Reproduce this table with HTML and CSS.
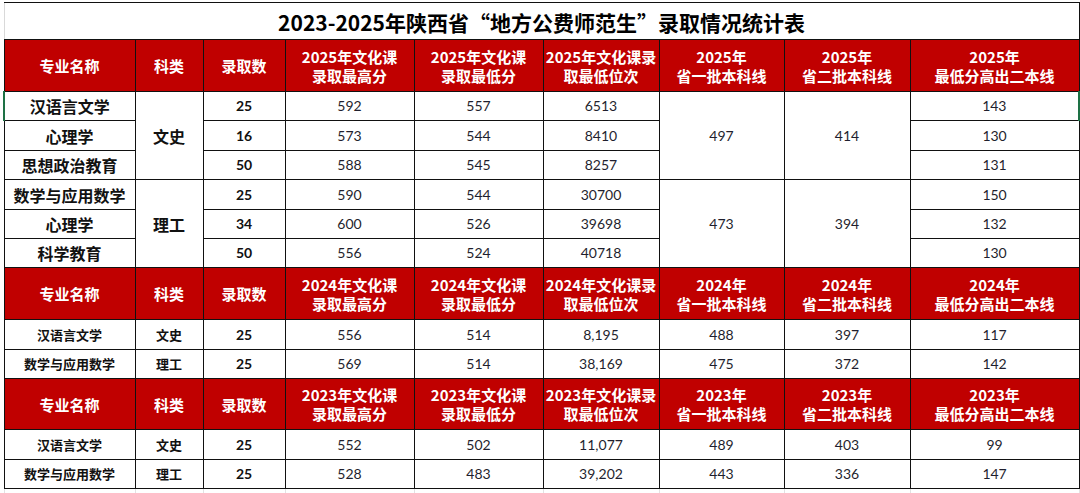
FILE: index.html
```html
<!DOCTYPE html>
<html lang="zh-CN">
<head>
<meta charset="utf-8">
<link rel="stylesheet" href="styles.css">
</head>
<body>
<table class="sheet">
  <colgroup>
    <col class="c1"><col class="c2"><col class="c3"><col class="c4"><col class="c5"><col class="c6"><col class="c7"><col class="c8"><col class="c9">
  </colgroup>
  <tr class="title-row"><td colspan="9" class="title">2023-2025年陕西省“地方公费师范生”录取情况统计表</td></tr>

  <tr class="head-row h52">
    <th>专业名称</th><th>科类</th><th>录取数</th>
    <th>2025年文化课<br>录取最高分</th><th>2025年文化课<br>录取最低分</th><th>2025年文化课录<br>取最低位次</th>
    <th>2025年<br>省一批本科线</th><th>2025年<br>省二批本科线</th><th>2025年<br>最低分高出二本线</th>
  </tr>
  <tr class="r29 big">
    <td class="name sel-l">汉语言文学</td><td rowspan="3" class="name">文史</td><td class="cnt">25</td>
    <td>592</td><td>557</td><td>6513</td><td rowspan="3">497</td><td rowspan="3">414</td><td class="sel-r">143</td>
  </tr>
  <tr class="r30 big">
    <td class="name">心理学</td><td class="cnt">16</td><td>573</td><td>544</td><td>8410</td><td>130</td>
  </tr>
  <tr class="r29 big">
    <td class="name">思想政治教育</td><td class="cnt">50</td><td>588</td><td>545</td><td class="gray-t">8257</td><td>131</td>
  </tr>
  <tr class="r30 big">
    <td class="name">数学与应用数学</td><td rowspan="3" class="name">理工</td><td class="cnt">25</td>
    <td>590</td><td>544</td><td>30700</td><td rowspan="3">473</td><td rowspan="3">394</td><td>150</td>
  </tr>
  <tr class="r29 big">
    <td class="name">心理学</td><td class="cnt">34</td><td>600</td><td>526</td><td class="gray-t">39698</td><td>132</td>
  </tr>
  <tr class="r29 big">
    <td class="name">科学教育</td><td class="cnt">50</td><td>556</td><td>524</td><td>40718</td><td>130</td>
  </tr>

  <tr class="head-row h52">
    <th>专业名称</th><th>科类</th><th>录取数</th>
    <th>2024年文化课<br>录取最高分</th><th>2024年文化课<br>录取最低分</th><th>2024年文化课录<br>取最低位次</th>
    <th>2024年<br>省一批本科线</th><th>2024年<br>省二批本科线</th><th>2024年<br>最低分高出二本线</th>
  </tr>
  <tr class="r30">
    <td class="name">汉语言文学</td><td class="name">文史</td><td class="cnt">25</td>
    <td>556</td><td>514</td><td>8,195</td><td>488</td><td>397</td><td>117</td>
  </tr>
  <tr class="r29">
    <td class="name">数学与应用数学</td><td class="name">理工</td><td class="cnt">25</td>
    <td>569</td><td>514</td><td>38,169</td><td>475</td><td>372</td><td>142</td>
  </tr>

  <tr class="head-row h51">
    <th>专业名称</th><th>科类</th><th>录取数</th>
    <th>2023年文化课<br>录取最高分</th><th>2023年文化课<br>录取最低分</th><th>2023年文化课录<br>取最低位次</th>
    <th>2023年<br>省一批本科线</th><th>2023年<br>省二批本科线</th><th>2023年<br>最低分高出二本线</th>
  </tr>
  <tr class="r30">
    <td class="name">汉语言文学</td><td class="name">文史</td><td class="cnt">25</td>
    <td>552</td><td>502</td><td>11,077</td><td>489</td><td>403</td><td>99</td>
  </tr>
  <tr class="r29">
    <td class="name">数学与应用数学</td><td class="name">理工</td><td class="cnt">25</td>
    <td>528</td><td>483</td><td>39,202</td><td>443</td><td>336</td><td>147</td>
  </tr>
  <tr class="grid-row">
    <td></td><td></td><td></td><td></td><td></td><td></td><td></td><td></td><td></td>
  </tr>
</table>
</body>
</html>
```

FILE: styles.css
```css
html, body {
  margin: 0;
  padding: 0;
  background: #ffffff;
}

body {
  font-family: Lato, "Noto Sans CJK SC", sans-serif;
  color: #1f1f2e;
}

.sheet {
  margin: 2px 0 0 3px;
  border-collapse: collapse;
  table-layout: fixed;
  width: 1075px;
}

.c1 { width: 131px; }
.c2 { width: 68px; }
.c3 { width: 82px; }
.c4 { width: 129px; }
.c5 { width: 129px; }
.c6 { width: 116px; }
.c7 { width: 125px; }
.c8 { width: 126px; }
.c9 { width: 169px; }

.sheet td,
.sheet th {
  border: 1px solid #111;
  padding: 0;
  text-align: center;
  vertical-align: middle;
  font-size: 14px;
  line-height: 18px;
  white-space: nowrap;
  overflow: hidden;
}

.title-row { height: 37px; }

.sheet td.title {
  font-family: "Noto Sans CJK SC", sans-serif;
  font-weight: 700;
  font-size: 21px;
  line-height: 26px;
  color: #000;
  border-left-color: #d9d9d9;
  padding-top: 1px;
}

.sheet .head-row th {
  background: #c00000;
  color: #ffffff;
  font-family: "Noto Sans CJK SC", sans-serif;
  font-weight: 700;
  font-size: 15px;
  line-height: 19px;
}

.h52 { height: 52px; }
.h51 { height: 51px; }
.r29 { height: 29px; }
.r30 { height: 30px; }

.sheet td.name {
  font-family: "Noto Sans CJK SC", sans-serif;
  font-weight: 700;
  font-size: 13px;
  color: #111;
}

.sheet .big td.name {
  font-size: 16px;
}

.sheet td.cnt {
  font-weight: 700;
  color: #111;
}

.sheet td.gray-t {
  border-top-color: #777;
}

.sheet td.sel-l {
  border-left: 2px solid #1e7145;
}

.sheet td.sel-r {
  border-right: 2px solid #1e7145;
}

.grid-row { height: 8px; }

.sheet .grid-row td {
  border: 1px solid #e2e2e2;
  border-top-color: #111;
}
```
